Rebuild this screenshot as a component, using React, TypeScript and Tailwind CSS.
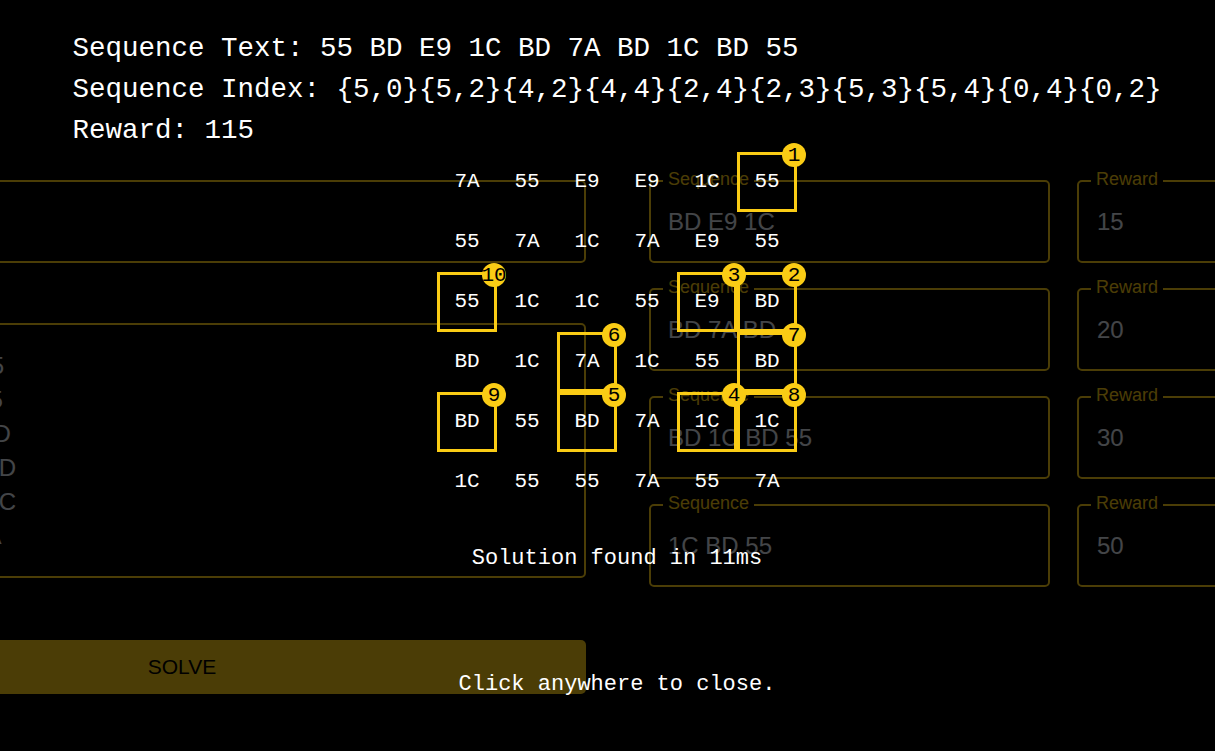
import React from "react";

const matrix = [
  ["7A", "55", "E9", "E9", "1C", "55"],
  ["55", "7A", "1C", "7A", "E9", "55"],
  ["55", "1C", "1C", "55", "E9", "BD"],
  ["BD", "1C", "7A", "1C", "55", "BD"],
  ["BD", "55", "BD", "7A", "1C", "1C"],
  ["1C", "55", "55", "7A", "55", "7A"],
];

// solution path as {col,row}
const path = [
  [5, 0], [5, 2], [4, 2], [4, 4], [2, 4],
  [2, 3], [5, 3], [5, 4], [0, 4], [0, 2],
];

const sequences = [
  { seq: "BD E9 1C", reward: "15" },
  { seq: "BD 7A BD", reward: "20" },
  { seq: "BD 1C BD 55", reward: "30" },
  { seq: "1C BD 55", reward: "50" },
];

const sans = "[font-family:'Liberation_Sans',Arial,sans-serif]";
const mono = "[font-family:'Liberation_Mono','DejaVu_Sans_Mono',monospace]";

function Field({ label, className, children }: { label: string; className?: string; children?: React.ReactNode }) {
  return (
    <div className={`relative rounded-[5px] border-2 border-[#facc15] ${className ?? ""}`}>
      <span className="absolute left-[12px] top-[-14px] bg-black px-[5px] text-[18px] leading-[22px] text-[#facc15]">
        {label}
      </span>
      {children}
    </div>
  );
}

function stepAt(col: number, row: number) {
  const i = path.findIndex(([c, r]) => c === col && r === row);
  return i === -1 ? null : i + 1;
}

export default function App() {
  return (
    <div className={`relative h-[751px] w-full overflow-hidden bg-black ${sans}`}>
      {/* background form */}
      <div className="ml-[-222px] flex gap-[63px] pt-[180px]">
        <div className="flex w-[808px] shrink-0 flex-col">
          <Field label="Buffer Size" className="flex h-[83px] items-center pl-[20px]">
            <span className="text-[24px] text-slate-200">7</span>
          </Field>
          <Field label="Matrix" className="mt-[60px] h-[255px] pl-[20px] pt-[24px]">
            {matrix.map((row, i) => (
              <div key={i} className="text-[24px] leading-[34px] text-slate-200">
                {row.join(" ")}
              </div>
            ))}
          </Field>
          <button className="mt-[62px] h-[54px] rounded-[5px] bg-[#facc15] text-[21px] text-black">SOLVE</button>
        </div>
        <div className="flex shrink-0 gap-[27px]">
          <div className="flex w-[401px] flex-col gap-[25px]">
            {sequences.map((s) => (
              <Field key={s.seq} label="Sequence" className="flex h-[83px] items-center pl-[17px]">
                <span className="text-[24px] text-slate-200">{s.seq}</span>
              </Field>
            ))}
          </div>
          <div className="flex w-[360px] flex-col gap-[25px]">
            {sequences.map((s) => (
              <Field key={s.reward} label="Reward" className="flex h-[83px] items-center pl-[18px]">
                <span className="text-[24px] text-slate-200">{s.reward}</span>
              </Field>
            ))}
          </div>
        </div>
      </div>

      {/* result modal */}
      <div className={`absolute inset-0 flex flex-col items-center bg-black/70 pl-[19px] pt-[28px] text-white ${mono}`}>
        <div className="w-fit text-[27.5px] leading-[41px]">
          <div>Sequence Text: 55 BD E9 1C BD 7A BD 1C BD 55</div>
          <div>Sequence Index: {"{5,0}{5,2}{4,2}{4,4}{2,4}{2,3}{5,3}{5,4}{0,4}{0,2}"}</div>
          <div>Reward: 115</div>
        </div>

        <div className="mt-[1px] grid w-[360px] grid-cols-6">
          {matrix.map((row, r) =>
            row.map((val, c) => {
              const step = stepAt(c, r);
              return (
                <div
                  key={`${r}-${c}`}
                  className={`relative flex h-[60px] w-[60px] items-center justify-center text-[21px] ${
                    step ? "border-[3px] border-[#facc15]" : ""
                  }`}
                >
                  {val}
                  {step && (
                    <span className="absolute right-[-12px] top-[-12px] z-10 flex h-6 w-6 items-center justify-center rounded-full bg-[#facc15] text-[21px] leading-none text-black">
                      {step}
                    </span>
                  )}
                </div>
              );
            })
          )}
        </div>

        <div className="mt-[32px] text-[22px] leading-[30px]">Solution found in 11ms</div>
        <div className="mt-[96px] text-[22px] leading-[30px]">Click anywhere to close.</div>
      </div>
    </div>
  );
}
